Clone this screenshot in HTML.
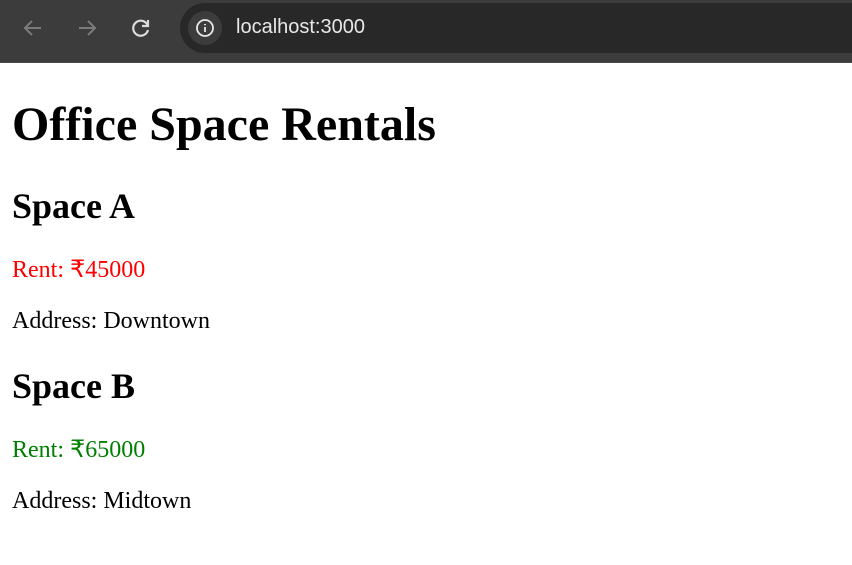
<!DOCTYPE html>
<html><head><style>
body{margin:0;width:852px;height:565px;overflow:hidden;background:#fff;font-family:"Liberation Serif",serif;position:relative}
.bar{position:absolute;left:0;top:0;width:852px;height:63px;background:#3c3c3c;border-bottom:1px solid #4a4a4a;box-sizing:border-box}
.pill{position:absolute;left:180px;top:3px;width:700px;height:50px;border-radius:25px;background:#282828}
.info{position:absolute;left:188px;top:11px;width:34px;height:34px;border-radius:17px;background:#3c3c3c}
.url{position:absolute;left:236px;top:16px;color:#e8e8e8;font:20px "Liberation Sans",sans-serif}
.t{position:absolute;left:12px;line-height:1;white-space:nowrap}
h1,h2,p{margin:0}
</style></head><body>
<div class="bar">
<svg style="position:absolute;left:22px;top:17px" width="22" height="22" viewBox="0 0 22 22" fill="none" stroke="#7a7a7a" stroke-width="2"><path d="M19 11H4M10 4l-7 7 7 7"/></svg>
<svg style="position:absolute;left:76px;top:17px" width="22" height="22" viewBox="0 0 22 22" fill="none" stroke="#7a7a7a" stroke-width="2"><path d="M3 11h15M12 4l7 7-7 7"/></svg>
<svg style="position:absolute;left:130px;top:17px" width="22" height="22" viewBox="0 0 22 22" fill="none" stroke="#dcdcdc" stroke-width="2.2"><path d="M17.5 8A7.5 7.5 0 1 0 18 13"/><path d="M18 3v6h-6" fill="none"/></svg>
<div class="pill"></div><div class="info"></div>
<svg style="position:absolute;left:195px;top:18px" width="20" height="20" viewBox="0 0 20 20" fill="none" stroke="#e8e8e8" stroke-width="1.8"><circle cx="10" cy="10" r="8"/><path d="M10 9v5M10 6v1.2"/></svg>
<div class="url">localhost:3000</div>
</div>
<h1 class="t" style="top:101px;font-size:48px;font-weight:bold">Office Space Rentals</h1>
<h2 class="t" style="top:188px;font-size:36px;font-weight:bold">Space A</h2>
<p class="t" style="top:258px;font-size:24px;color:red">Rent: ₹45000</p>
<p class="t" style="top:309px;font-size:24px">Address: Downtown</p>
<h2 class="t" style="top:368px;font-size:36px;font-weight:bold">Space B</h2>
<p class="t" style="top:438px;font-size:24px;color:green">Rent: ₹65000</p>
<p class="t" style="top:489px;font-size:24px">Address: Midtown</p>
</body></html>
